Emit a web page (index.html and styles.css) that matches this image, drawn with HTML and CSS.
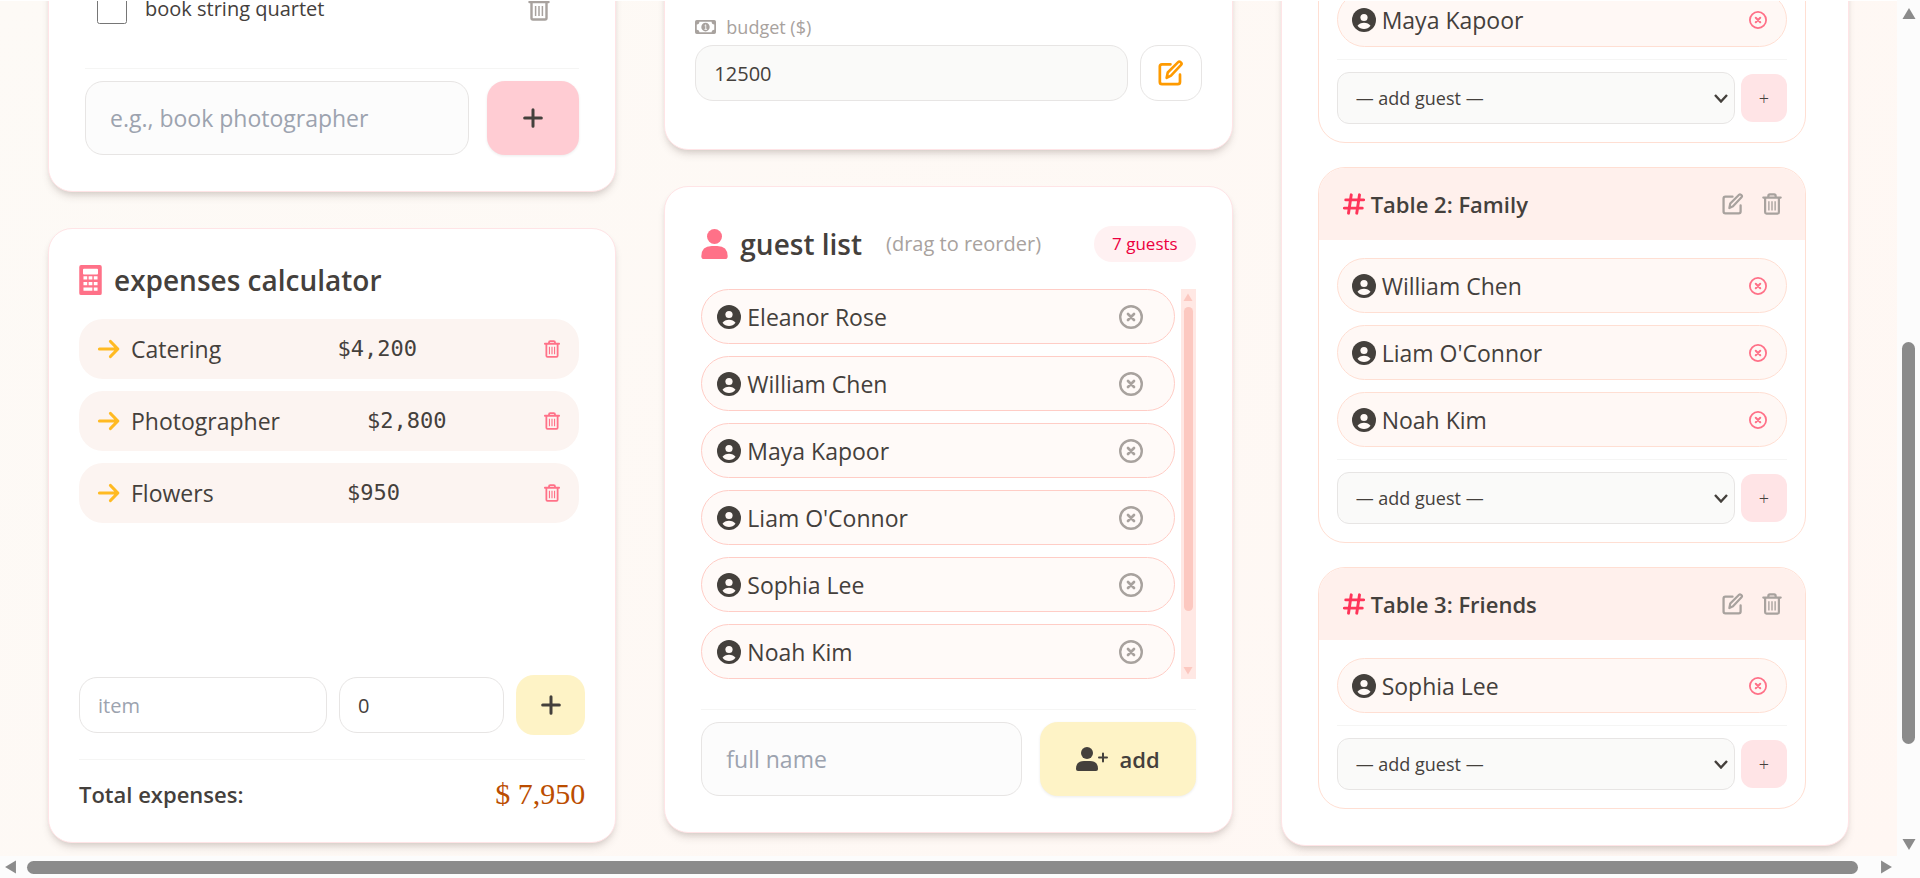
FILE: index.html
```html
<!DOCTYPE html>
<html lang="en">
<head>
    <meta charset="UTF-8">
    <meta name="viewport" content="width=device-width, initial-scale=1.0">
    <title>Wedding Planner</title>
    <link rel="stylesheet" href="styles.css">
</head>
<body>
    <!-- Icons -->
    <svg class="sprite" aria-hidden="true">
        <symbol id="i-trash" viewBox="0 0 24 24">
            <path d="M2.500 5h19M8 4.500V3.200q0-1.700 1.700-1.700h4.600q1.700 0 1.700 1.700v1.300M4.500 5.500v15.500q0 1.500 1.500 1.500h12q1.500 0 1.500-1.500V5.500" fill="none" stroke="currentColor" stroke-width="2.400" stroke-linecap="round"/>
            <path d="M8.600 9v10M12 9v10M15.400 9v10" fill="none" stroke="currentColor" stroke-width="1.500"/>
        </symbol>
        <symbol id="i-plus" viewBox="0 0 24 24">
            <path d="M12 2v20M2 12h20" fill="none" stroke="currentColor" stroke-width="3.600" stroke-linecap="round"/>
        </symbol>
        <symbol id="i-calc" viewBox="0 0 24 32">
            <path fill-rule="evenodd" fill="currentColor" d="M2 0h20q2 0 2 2v28q0 2-2 2H2q-2 0-2-2V2q0-2 2-2zM5 4q-1 0-1 1v4q0 1 1 1h14q1 0 1-1V5q0-1-1-1zM4.500 12v3.500h4V12zM10 12v3.500h4V12zM15.500 12v3.500h4V12zM4.500 18v3.500h4V18zM10 18v3.500h4V18zM15.500 18v3.500h4V18zM4.500 24v3.500h9.500V24zM15.500 24v3.500h4V24z"/>
        </symbol>
        <symbol id="i-arrow" viewBox="0 0 24 24">
            <path d="M2.500 12h18M13.500 4.500L20.800 12l-7.300 7.500" fill="none" stroke="currentColor" stroke-width="3.200" stroke-linecap="round" stroke-linejoin="round"/>
        </symbol>
        <symbol id="i-cash" viewBox="0 0 24 16">
            <path fill-rule="evenodd" fill="currentColor" d="M2 0h20q2 0 2 2v12q0 2-2 2H2q-2 0-2-2V2q0-2 2-2zM5 2q0 3-3 3v6q3 0 3 3h14q0-3 3-3V5q-3 0-3-3z"/>
            <ellipse cx="12" cy="8" rx="4.800" ry="5" fill="currentColor"/>
            <path d="M11 6.500l1.300-1v5M10.800 10.700h3" fill="none" stroke="#fff" stroke-width="1"/>
        </symbol>
        <symbol id="i-edit" viewBox="0 0 24 24">
            <path d="M11.500 4H3.700q-2 0-2 2v14.300q0 2 2 2h14.600q2 0 2-2V13.500" fill="none" stroke="currentColor" stroke-width="2.500" stroke-linecap="round"/>
            <path d="M8 16.500l1-5L18.600 1.900q1-1 2.100 0l.6.6q1 1 0 2.100L12 14.500z" fill="none" stroke="currentColor" stroke-width="2.400" stroke-linejoin="round"/>
        </symbol>
        <symbol id="i-person" viewBox="0 0 28 32">
            <circle cx="14" cy="8" r="8" fill="currentColor"/>
            <path d="M0 29q0-11 11-11h6q11 0 11 11 0 3-2.500 3h-23Q0 32 0 29z" fill="currentColor"/>
        </symbol>
        <symbol id="i-person-add" viewBox="0 0 32 24">
            <circle cx="11" cy="6" r="6" fill="currentColor"/>
            <path d="M0 22q0-8 8-8h6q8 0 8 8 0 2-2 2H2q-2 0-2-2z" fill="currentColor"/>
            <path d="M27 6.500v8M23 10.500h8" fill="none" stroke="currentColor" stroke-width="2" stroke-linecap="round"/>
        </symbol>
        <symbol id="i-user" viewBox="0 0 24 24">
            <circle cx="12" cy="12" r="12" fill="currentColor"/>
            <circle cx="12" cy="9.500" r="3.600" fill="#fff9f6"/>
            <path d="M5.500 17.800q2.200-3 6.500-3t6.500 3q-2.600 3.200-6.500 3.200t-6.500-3.200z" fill="#fff9f6"/>
        </symbol>
        <symbol id="i-close" viewBox="0 0 24 24">
            <circle cx="12" cy="12" r="10.800" fill="none" stroke="currentColor" stroke-width="2.400"/>
            <path d="M9 9l6 6M15 9l-6 6" fill="none" stroke="currentColor" stroke-width="2.700" stroke-linecap="round"/>
        </symbol>
        <symbol id="i-hash" viewBox="0 0 24 24">
            <path d="M9 2L6 22M18 2l-3 20M3 7.500h19.500M1.500 16.500H21" fill="none" stroke="currentColor" stroke-width="3.200" stroke-linecap="round"/>
        </symbol>
    </svg>

    <div class="window">
        <main class="page">
            <div class="board">

                <!-- Left column -->
                <div class="column">
                    <section class="card">
                        <div class="task">
                            <input type="checkbox" id="task-quartet">
                            <label for="task-quartet">book string quartet</label>
                            <button class="icon-btn" aria-label="Delete task"><svg class="icon-24"><use href="#i-trash"/></svg></button>
                        </div>
                        <form class="add-row">
                            <input type="text" class="big-input" placeholder="e.g., book photographer" aria-label="New task">
                            <button type="button" class="big-btn pink" aria-label="Add task"><svg class="icon-20"><use href="#i-plus"/></svg></button>
                        </form>
                    </section>

                    <section class="card compact grow">
                        <h2 class="title"><svg class="icon-calc"><use href="#i-calc"/></svg>expenses calculator</h2>
                        <ul class="expenses">
                            <li>
                                <span class="expense-name"><svg class="icon-24"><use href="#i-arrow"/></svg>Catering</span>
                                <span class="amount">$4,200</span>
                                <button class="icon-btn rose" aria-label="Delete Catering"><svg class="icon-18"><use href="#i-trash"/></svg></button>
                            </li>
                            <li>
                                <span class="expense-name"><svg class="icon-24"><use href="#i-arrow"/></svg>Photographer</span>
                                <span class="amount">$2,800</span>
                                <button class="icon-btn rose" aria-label="Delete Photographer"><svg class="icon-18"><use href="#i-trash"/></svg></button>
                            </li>
                            <li>
                                <span class="expense-name"><svg class="icon-24"><use href="#i-arrow"/></svg>Flowers</span>
                                <span class="amount">$950</span>
                                <button class="icon-btn rose" aria-label="Delete Flowers"><svg class="icon-18"><use href="#i-trash"/></svg></button>
                            </li>
                        </ul>
                        <form class="expense-form">
                            <input type="text" class="input" placeholder="item" aria-label="Item">
                            <input type="text" inputmode="numeric" class="input" value="0" aria-label="Cost">
                            <button type="button" class="expense-add" aria-label="Add expense"><svg class="icon-20"><use href="#i-plus"/></svg></button>
                        </form>
                        <div class="total">
                            <span>Total expenses:</span>
                            <span class="total-sum">$ 7,950</span>
                        </div>
                    </section>
                </div>

                <!-- Middle column -->
                <div class="column">
                    <section class="card compact budget">
                        <label for="budget"><svg class="icon-cash"><use href="#i-cash"/></svg>budget ($)</label>
                        <div class="budget-row">
                            <input type="text" inputmode="numeric" class="input filled" id="budget" value="12500">
                            <button class="edit-btn" aria-label="Edit budget"><svg class="icon-26"><use href="#i-edit"/></svg></button>
                        </div>
                    </section>

                    <section class="card">
                        <header class="guest-header">
                            <h2 class="title"><svg class="icon-person"><use href="#i-person"/></svg>guest list</h2>
                            <span class="hint">(drag to reorder)</span>
                            <span class="badge">7 guests</span>
                        </header>
                        <div class="guest-scroll">
                            <ul class="guests">
                                <li><svg class="icon-24"><use href="#i-user"/></svg>Eleanor Rose<button class="icon-btn" aria-label="Remove Eleanor Rose"><svg class="icon-24"><use href="#i-close"/></svg></button></li>
                                <li><svg class="icon-24"><use href="#i-user"/></svg>William Chen<button class="icon-btn" aria-label="Remove William Chen"><svg class="icon-24"><use href="#i-close"/></svg></button></li>
                                <li><svg class="icon-24"><use href="#i-user"/></svg>Maya Kapoor<button class="icon-btn" aria-label="Remove Maya Kapoor"><svg class="icon-24"><use href="#i-close"/></svg></button></li>
                                <li><svg class="icon-24"><use href="#i-user"/></svg>Liam O'Connor<button class="icon-btn" aria-label="Remove Liam O'Connor"><svg class="icon-24"><use href="#i-close"/></svg></button></li>
                                <li><svg class="icon-24"><use href="#i-user"/></svg>Sophia Lee<button class="icon-btn" aria-label="Remove Sophia Lee"><svg class="icon-24"><use href="#i-close"/></svg></button></li>
                                <li><svg class="icon-24"><use href="#i-user"/></svg>Noah Kim<button class="icon-btn" aria-label="Remove Noah Kim"><svg class="icon-24"><use href="#i-close"/></svg></button></li>
                            </ul>
                            <div class="list-bar">
                                <svg viewBox="0 0 10 8"><path d="M5 0.500L9.500 8H0.500z"/></svg>
                                <div class="list-track"><div class="list-thumb"></div></div>
                                <svg viewBox="0 0 10 8"><path d="M5 7.500L9.500 0H0.500z"/></svg>
                            </div>
                        </div>
                        <form class="add-row">
                            <input type="text" class="big-input" placeholder="full name" aria-label="Full name">
                            <button type="button" class="big-btn yellow"><svg class="icon-add"><use href="#i-person-add"/></svg>add</button>
                        </form>
                    </section>
                </div>

                <!-- Right column -->
                <div class="column">
                    <section class="card grow tables">
                        <article class="table-card">
                            <div class="table-body">
                                <ul class="guests seated">
                                    <li><svg class="icon-24"><use href="#i-user"/></svg>Maya Kapoor<button class="icon-btn rose" aria-label="Unseat Maya Kapoor"><svg class="icon-18"><use href="#i-close"/></svg></button></li>
                                </ul>
                                <div class="seat-row">
                                    <select aria-label="Add guest to table 1"><option>— add guest —</option></select>
                                    <button aria-label="Seat guest">+</button>
                                </div>
                            </div>
                        </article>

                        <article class="table-card">
                            <header class="table-header">
                                <h3><svg class="icon-22"><use href="#i-hash"/></svg>Table 2: Family</h3>
                                <button class="icon-btn" aria-label="Rename table"><svg class="icon-22"><use href="#i-edit"/></svg></button>
                                <button class="icon-btn" aria-label="Delete table"><svg class="icon-22"><use href="#i-trash"/></svg></button>
                            </header>
                            <div class="table-body">
                                <ul class="guests seated">
                                    <li><svg class="icon-24"><use href="#i-user"/></svg>William Chen<button class="icon-btn rose" aria-label="Unseat William Chen"><svg class="icon-18"><use href="#i-close"/></svg></button></li>
                                    <li><svg class="icon-24"><use href="#i-user"/></svg>Liam O'Connor<button class="icon-btn rose" aria-label="Unseat Liam O'Connor"><svg class="icon-18"><use href="#i-close"/></svg></button></li>
                                    <li><svg class="icon-24"><use href="#i-user"/></svg>Noah Kim<button class="icon-btn rose" aria-label="Unseat Noah Kim"><svg class="icon-18"><use href="#i-close"/></svg></button></li>
                                </ul>
                                <div class="seat-row">
                                    <select aria-label="Add guest to table 2"><option>— add guest —</option></select>
                                    <button aria-label="Seat guest">+</button>
                                </div>
                            </div>
                        </article>

                        <article class="table-card">
                            <header class="table-header">
                                <h3><svg class="icon-22"><use href="#i-hash"/></svg>Table 3: Friends</h3>
                                <button class="icon-btn" aria-label="Rename table"><svg class="icon-22"><use href="#i-edit"/></svg></button>
                                <button class="icon-btn" aria-label="Delete table"><svg class="icon-22"><use href="#i-trash"/></svg></button>
                            </header>
                            <div class="table-body">
                                <ul class="guests seated">
                                    <li><svg class="icon-24"><use href="#i-user"/></svg>Sophia Lee<button class="icon-btn rose" aria-label="Unseat Sophia Lee"><svg class="icon-18"><use href="#i-close"/></svg></button></li>
                                </ul>
                                <div class="seat-row">
                                    <select aria-label="Add guest to table 3"><option>— add guest —</option></select>
                                    <button aria-label="Seat guest">+</button>
                                </div>
                            </div>
                        </article>
                    </section>
                </div>
            </div>
        </main>

        <!-- Scrollbars -->
        <div class="bar-v">
            <svg viewBox="0 0 14 12"><path d="M7 1l6 10H1z"/></svg>
            <div class="track-v"><div class="thumb-v"></div></div>
            <svg viewBox="0 0 14 12"><path d="M7 11l6-10H1z"/></svg>
        </div>
        <div class="bar-h">
            <svg viewBox="0 0 12 14"><path d="M1 7l10-6v12z"/></svg>
            <div class="track-h"><div class="thumb-h"></div></div>
            <svg viewBox="0 0 12 14"><path d="M11 7L1 1v12z"/></svg>
        </div>
    </div>
</body>
</html>
```
FILE: styles.css
```css
* {
    box-sizing: border-box;
}

body {
    margin: 0;
    font-family: "Segoe UI", "Open Sans", "Noto Sans", sans-serif;
    font-size: 23px;
    line-height: 36px;
    color: #44403c;
    background-color: #fcfcfc;
}

ul, h2, h3 {
    margin: 0;
    padding: 0;
    list-style: none;
}

button, input, select {
    font-family: inherit;
    color: inherit;
    margin: 0;
}

button {
    border: 0;
    padding: 0;
    cursor: pointer;
}

svg {
    display: block;
    flex-shrink: 0;
}

.sprite {
    display: none;
}

.icon-18 { width: 18px; height: 18px; }
.icon-20 { width: 20px; height: 20px; }
.icon-22 { width: 22px; height: 22px; }
.icon-24 { width: 24px; height: 24px; }
.icon-26 { width: 26px; height: 26px; }
.icon-calc { width: 23px; height: 30px; color: #ff7188; }
.icon-person { width: 27px; height: 30px; color: #ff7188; }
.icon-cash { width: 21px; height: 14px; }
.icon-add { width: 32px; height: 24px; }

/* Window */
.window {
    display: grid;
    grid-template-columns: minmax(0, 1fr) 23px;
    grid-template-rows: minmax(0, 1fr) 22px;
    height: 100vh;
}

.page {
    overflow: hidden;
    border-top: 1px solid #fff;
    background: linear-gradient(135deg, #fdfaf6, #fff7f3);
}

.board {
    display: grid;
    grid-template-columns: repeat(3, minmax(0, 1fr));
    gap: 48px;
    padding: 0 48px;
    margin-top: -65px; /* scrolled part of the page */
}

.column {
    display: flex;
    flex-direction: column;
    gap: 36px;
}

/* Cards */
.card {
    background-color: #fff;
    border: 1px solid #ffe4e6;
    border-radius: 24px;
    padding: 36px;
    box-shadow: 0 6px 9px -2px rgba(68, 48, 40, 0.15), 0 3px 6px -3px rgba(68, 48, 40, 0.15);
}

.card.compact {
    padding: 30px;
}

.card.grow {
    display: flex;
    flex-direction: column;
}

.title {
    display: flex;
    align-items: center;
    gap: 12px;
    font-size: 28px;
    font-weight: 600;
    line-height: 42px;
}

.icon-btn {
    background: none;
    color: #a8a29e;
}

.icon-btn.rose {
    color: #ff7188;
}

/* Checklist */
.task {
    display: flex;
    align-items: center;
    gap: 18px;
    height: 72px;
    padding: 0 28px 0 12px;
    font-size: 20px;
    line-height: 20px;
}

.task input {
    width: 30px;
    height: 30px;
}

.task label {
    flex: 1;
}

.add-row {
    display: flex;
    gap: 18px;
    margin-top: 23px;
    padding-top: 12px;
    border-top: 1px solid #f5f5f4;
}

.big-input {
    flex: 1;
    min-width: 0;
    height: 74px;
    padding: 0 24px;
    font-size: 23px;
    background-color: #fcfcfc;
    border: 1px solid #e7e5e4;
    border-radius: 18px;
}

input::placeholder {
    color: #9ca3af;
    opacity: 1;
}

.big-btn {
    display: flex;
    align-items: center;
    justify-content: center;
    gap: 12px;
    height: 74px;
    padding: 0 36px;
    font-size: 22px;
    font-weight: 600;
    border-radius: 18px;
    box-shadow: 0 1px 3px rgba(0, 0, 0, 0.08);
}

.big-btn.pink {
    background-color: #ffccd3;
}

.big-btn.yellow {
    background-color: #fef3c6;
}

/* Expenses */
.expenses {
    display: flex;
    flex-direction: column;
    gap: 12px;
    min-height: 344px;
    margin-top: 18px;
    padding-right: 6px;
}

.expenses li {
    display: flex;
    justify-content: space-between;
    align-items: center;
    height: 60px;
    padding: 0 18px;
    background-color: #fcf4f1;
    border-radius: 24px;
}

.expense-name {
    display: flex;
    align-items: center;
    gap: 10px;
}

.expense-name svg {
    color: #ffba22;
}

.expenses .icon-btn {
    padding-left: 10px;
}

.amount {
    font-family: Consolas, "DejaVu Sans Mono", monospace;
    font-size: 22px;
}

.expense-form {
    display: grid;
    grid-template-columns: 3fr 2fr 69px;
    align-items: center;
    gap: 12px;
    margin-top: 12px;
}

.input {
    width: 100%;
    min-width: 0;
    height: 56px;
    padding: 0 18px;
    font-size: 20px;
    background-color: #fff;
    border: 1px solid #e7e5e4;
    border-radius: 18px;
}

.input.filled {
    background-color: #fafaf9;
}

.expense-add {
    display: flex;
    align-items: center;
    justify-content: center;
    height: 60px;
    background-color: #fef3c6;
    border-radius: 18px;
}

.total {
    display: flex;
    justify-content: space-between;
    align-items: center;
    margin-top: 24px;
    padding-top: 16px;
    border-top: 1px solid #f5f5f4;
    font-size: 22px;
    font-weight: 600;
}

.total-sum {
    font-family: Georgia, "Liberation Serif", serif;
    font-size: 30px;
    font-weight: 400;
    color: #bb4d00;
}

/* Budget */
.budget {
    display: flex;
    flex-direction: column;
    justify-content: flex-end;
    min-height: 214px;
}

.card.budget {
    padding-bottom: 48px;
}

.budget label {
    display: flex;
    align-items: center;
    gap: 10px;
    font-size: 18px;
    color: #a8a29e;
}

.budget-row {
    display: flex;
    gap: 12px;
}

.edit-btn {
    display: flex;
    align-items: center;
    justify-content: center;
    flex: 0 0 62px;
    background-color: #fff;
    border: 1px solid #e7e5e4;
    border-radius: 18px;
    color: #fe9a00;
}

/* Guest list */
.guest-header {
    display: flex;
    align-items: center;
    gap: 24px;
    margin-bottom: 24px;
}

.hint {
    font-size: 20px;
    color: #a8a29e;
}

.badge {
    margin-left: auto;
    padding: 0 18px;
    font-size: 17px;
    color: #ec003f;
    background-color: #fff1f2;
    border-radius: 18px;
}

.guest-scroll {
    display: flex;
    gap: 6px;
    margin-bottom: 30px;
}

.guest-scroll + .add-row {
    margin-top: 0;
}

.guests {
    flex: 1;
    display: flex;
    flex-direction: column;
    gap: 12px;
}

.guests li {
    display: flex;
    align-items: center;
    gap: 6px;
    height: 55px;
    padding: 0 31px 0 15px;
    background-color: #fffaf8;
    border: 1px solid #ffcdc6;
    border-radius: 28px;
}

.guests .icon-btn {
    margin-left: auto;
}

.guests.seated li {
    padding: 0 19px 0 14px;
    background-color: #fff8f5;
    border-color: #ffdfd3;
}

.list-bar {
    display: flex;
    flex-direction: column;
    align-items: center;
    gap: 6px;
    width: 15px;
    padding: 4px 0;
    background-color: #ffe8e4;
}

.list-bar svg {
    width: 10px;
    height: 8px;
    fill: #fcc8c0;
}

.list-track {
    flex: 1;
}

.list-thumb {
    width: 9px;
    height: 86%;
    background-color: #fcc8c0;
    border-radius: 5px;
}

/* Seating tables */
.tables {
    gap: 24px;
}

.card.tables {
    padding-right: 42px;
}

.table-card {
    border: 1px solid #ffdfd3;
    border-radius: 27px;
    overflow: hidden;
}

.table-header {
    display: flex;
    align-items: center;
    gap: 17px;
    height: 72px;
    padding: 0 22px 0 24px;
    background-color: #fff0ec;
}

.table-header h3 {
    flex: 1;
    display: flex;
    align-items: center;
    gap: 6px;
    font-size: 22px;
    font-weight: 600;
}

.table-header h3 svg {
    color: #ff3459;
}

.table-body {
    padding: 18px;
}

.seat-row {
    display: flex;
    align-items: center;
    gap: 6px;
    margin-top: 12px;
    padding-top: 12px;
    border-top: 1px solid #f5f5f4;
}

.seat-row select {
    appearance: none;
    flex: 1;
    min-width: 0;
    height: 52px;
    padding: 0 36px 0 18px;
    font-size: 18px;
    background: #fafaf9 url("data:image/svg+xml,%3Csvg xmlns='http://www.w3.org/2000/svg' viewBox='0 0 14 9'%3E%3Cpath d='M1 1l6 6.500L13 1' fill='none' stroke='%2344403c' stroke-width='2.400'/%3E%3C/svg%3E") no-repeat right 6px center / 14px 9px;
    border: 1px solid #e7e5e4;
    border-radius: 12px;
}

.seat-row button {
    width: 46px;
    height: 48px;
    font-size: 18px;
    font-weight: 300;
    background-color: #ffe4e6;
    border-radius: 12px;
}

/* Scrollbars */
.bar-v, .bar-h {
    display: flex;
    align-items: center;
    background-color: #fcfcfc;
    fill: #8b8b8b;
}

.bar-v {
    flex-direction: column;
    padding: 7px 0 5px;
}

.bar-v svg {
    width: 16px;
    height: 13px;
}

.track-v {
    flex: 1;
    width: 13px;
    padding-top: 322px;
}

.thumb-v {
    height: 402px;
    background-color: #8b8b8b;
    border-radius: 7px;
}

.bar-h {
    gap: 10px;
    padding: 0 4px;
}

.bar-h svg {
    width: 13px;
    height: 16px;
}

.track-h {
    flex: 1;
    padding-right: 12px;
}

.thumb-h {
    height: 13px;
    background-color: #8b8b8b;
    border-radius: 7px;
}
```
